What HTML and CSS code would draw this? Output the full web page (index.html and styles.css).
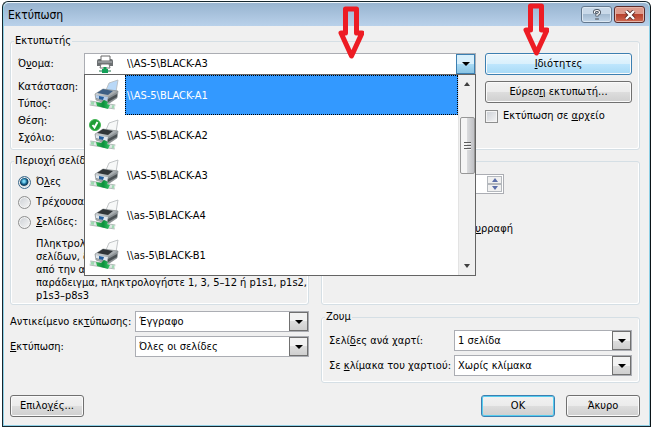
FILE: index.html
```
<!DOCTYPE html>
<html lang="el">
<head>
    <meta charset="utf-8">
    <title>Εκτύπωση</title>
    <link rel="stylesheet" href="styles.css">
</head>
<body>
    <!-- Shared icons -->
    <svg class="sprite" aria-hidden="true">
        <defs>
            <linearGradient id="metal" x1="0" y1="0" x2="1" y2="1">
                <stop offset="0" stop-color="#e4e8ea"/>
                <stop offset="1" stop-color="#6f7578"/>
            </linearGradient>
            <linearGradient id="cable" x1="0" y1="0" x2="1" y2="0">
                <stop offset="0" stop-color="#35b558"/>
                <stop offset="0.5" stop-color="#0b8f3c"/>
                <stop offset="1" stop-color="#35c566"/>
            </linearGradient>
        </defs>
        <symbol id="printer" viewBox="0 0 32 32">
            <path class="paper" d="M17 11 20 4 29 1 27 13 22 16Z" stroke="#b4b8ba" stroke-width="0.8"/>
            <path d="M6 15 14 10 29 12 28 19 19 25 7 21Z" fill="url(#metal)" stroke="#777d80" stroke-width="0.6"/>
            <path class="lid" d="M8 14 14 10 24 12 19 16Z"/>
            <path d="M7 16 19 18 28 13 28 18 19 23 7 20Z" fill="#8b9194"/>
            <path class="panel" d="M7 16 19 18 18 22 7 19Z"/>
            <path d="M10 17 15 18 14 21 10 20Z" fill="#245e9e"/>
            <path d="M19 20 28 15 28 18 19 23Z" fill="#4c5255"/>
            <path d="M1 24 26 28" stroke="#b4bbb9" stroke-width="5"/>
            <path d="M1 24 26 28" stroke="#dfe7e4" stroke-width="3"/>
            <path d="M2 24 5 24.500M23 27.500 25 28" stroke="#9fd9b2" stroke-width="3"/>
            <path d="M7 23 12 24 15 21 19 23 18 25 21 26 19 30 8 27Z" fill="url(#cable)"/>
        </symbol>
        <symbol id="printer-small" viewBox="0 0 18 18">
            <path d="M5 1H14V6H5Z" fill="#fff" stroke="#666"/>
            <path d="M1 6Q1 4 3 4H5V6H14V4H15Q17 4 17 6V11H1Z" fill="#6c7072"/>
            <path d="M2 7H16" stroke="#b8bcbe"/>
            <path d="M5 9H13L14 13H4Z" fill="#fff" stroke="#777"/>
            <path d="M9 12V15" stroke="#129a50" stroke-width="3"/>
            <path d="M3 16H15" stroke="#8fb8a5" stroke-width="2"/>
            <path d="M6 14H12V18H6Z" fill="#12a058"/>
        </symbol>
        <symbol id="arrow" viewBox="0 0 26 54">
            <path d="M7.500 3H18.500V27H24L13.500 50 3 27H7.500Z" fill="none" stroke="#ed1c24" stroke-width="5" stroke-linejoin="round"/>
        </symbol>
    </svg>

    <div class="dialog" role="dialog" aria-labelledby="dialog-title">
        <header class="titlebar">
            <h1 class="title" id="dialog-title">Εκτύπωση</h1>
            <button type="button" class="caption-btn" aria-label="Βοήθεια">
                <svg viewBox="0 0 12 12" width="12" height="12">
                    <path d="M3.500 4.500V3Q3.500 1.500 6 1.500T8.500 3.500Q8.500 5 6 5.500V7.500M6 9V11" fill="none" stroke="#4b5562" stroke-width="3"/>
                    <path d="M3.500 4V3Q3.500 1.500 6 1.500T8.500 3.500Q8.500 5 6 5.500V7M6 9.500V10.500" fill="none" stroke="#fff" stroke-width="1.200"/>
                </svg>
            </button>
            <button type="button" class="caption-btn caption-close" aria-label="Κλείσιμο">
                <svg viewBox="0 0 12 10" width="12" height="10">
                    <path d="M2 1 10 9M10 1 2 9" stroke="#5b2b28" stroke-width="4"/>
                    <path d="M2 1 10 9M10 1 2 9" stroke="#fff" stroke-width="2.400"/>
                </svg>
            </button>
        </header>

        <form class="content">
            <fieldset class="group printer-group">
                <legend>Εκτυπωτής</legend>
                <div class="printer-info">
                    <label for="printer-name" class="name-label">Ό<u>ν</u>ομα:</label>
                    <span>Κατάσταση:</span>
                    <span>Τύπος:</span>
                    <span>Θέση:</span>
                    <span>Σχόλιο:</span>
                </div>
                <div class="printer-pick">
                    <div class="combo combo-open">
                        <select id="printer-name">
                            <option>\\AS-5\BLACK-A3</option>
                        </select>
                        <svg class="combo-icon" width="18" height="18"><use href="#printer-small"/></svg>
                    </div>
                    <div class="printer-list">
                        <ul class="printers" role="listbox" aria-label="Εκτυπωτές">
                            <li class="selected" role="option" aria-selected="true">
                                <svg width="32" height="32"><use href="#printer"/></svg>
                                <span>\\AS-5\BLACK-A1</span>
                            </li>
                            <li role="option">
                                <svg width="32" height="32"><use href="#printer"/></svg>
                                <svg class="default-mark" viewBox="0 0 12 12" width="12" height="12">
                                    <circle cx="6" cy="6" r="5.500" fill="#1f9e35" stroke="#45b556"/>
                                    <path d="M3.500 6 5.500 8.500 8.500 3" fill="none" stroke="#fff" stroke-width="2"/>
                                </svg>
                                <span>\\AS-5\BLACK-A2</span>
                            </li>
                            <li role="option">
                                <svg width="32" height="32"><use href="#printer"/></svg>
                                <span>\\AS-5\BLACK-A3</span>
                            </li>
                            <li role="option">
                                <svg width="32" height="32"><use href="#printer"/></svg>
                                <span>\\as-5\BLACK-A4</span>
                            </li>
                            <li role="option">
                                <svg width="32" height="32"><use href="#printer"/></svg>
                                <span>\\as-5\BLACK-B1</span>
                            </li>
                        </ul>
                        <div class="scrollbar">
                            <i class="tri tri-up"></i>
                            <div class="thumb"><i class="grip"></i></div>
                            <i class="tri tri-down"></i>
                        </div>
                    </div>
                </div>
                <div class="printer-actions">
                    <button type="button" class="btn btn-hot"><u>Ι</u>διότητες</button>
                    <button type="button" class="btn">Εύρεσ<u>η</u> εκτυπωτή...</button>
                    <label class="check"><input type="checkbox"> <span>Εκτύπωση σε <u>α</u>ρχείο</span></label>
                </div>
            </fieldset>

            <div class="columns">
                <fieldset class="group range-group">
                    <legend>Περιοχή σελίδας</legend>
                    <label class="radio"><input type="radio" name="range" checked> <span>Ό<u>λ</u>ες</span></label>
                    <label class="radio"><input type="radio" name="range"> <span>Τρέ<u>χ</u>ουσα σελίδα</span></label>
                    <label class="radio"><input type="radio" name="range"> <span><u>Σ</u>ελίδες:</span></label>
                    <p class="hint">Πληκτρολογήστε αριθμούς ή περιοχές<br>
                        σελίδων, διαχωρισμένα με κόμμα<br>
                        από την αρχή του εγγράφου. Για<br>
                        παράδειγμα, πληκτρολογήστε 1, 3, 5–12 ή p1s1, p1s2,<br>
                        p1s3–p8s3</p>
                </fieldset>

                <fieldset class="group copies-group">
                    <legend>Αντίτυπα</legend>
                    <div class="copies">
                        <label for="copies">Αριθμός αντιτύπων:</label>
                        <div class="spinner">
                            <input type="text" id="copies" value="1">
                            <button type="button" class="spin" aria-label="Αύξηση"><i class="tri tri-up"></i></button>
                            <button type="button" class="spin" aria-label="Μείωση"><i class="tri tri-down"></i></button>
                        </div>
                    </div>
                    <label class="check collate"><input type="checkbox"> <span>Σ<u>υ</u>ρραφή</span></label>
                </fieldset>

                <div class="what">
                    <label for="what">Αντικείμενο εκ<u>τ</u>ύπωσης:</label>
                    <div class="combo">
                        <select id="what"><option>Έγγραφο</option></select>
                    </div>
                    <label for="pages"><u>Ε</u>κτύπωση:</label>
                    <div class="combo">
                        <select id="pages"><option>Όλες οι σελίδες</option></select>
                    </div>
                </div>

                <fieldset class="group zoom-group">
                    <legend>Ζουμ</legend>
                    <label for="per-sheet">Σελί<u>δ</u>ες ανά χαρτί:</label>
                    <div class="combo">
                        <select id="per-sheet"><option>1 σελίδα</option></select>
                    </div>
                    <label for="scale">Σε <u>κ</u>λίμακα του χαρτιού:</label>
                    <div class="combo">
                        <select id="scale"><option>Χωρίς κλίμακα</option></select>
                    </div>
                </fieldset>
            </div>

            <footer class="footer">
                <button type="button" class="btn options">Επιλο<u>γ</u>ές...</button>
                <button type="submit" class="btn btn-default">OK</button>
                <button type="button" class="btn">Άκυρο</button>
            </footer>
        </form>

        <svg class="pointer pointer-list" width="26" height="54"><use href="#arrow"/></svg>
        <svg class="pointer pointer-props" width="26" height="54"><use href="#arrow"/></svg>
    </div>
</body>
</html>
```
FILE: styles.css
```
* {
    box-sizing: border-box;
}
body {
    margin: 0;
    padding: 1px 1px 0 2px;
    background: #fff;
    font-family: "DejaVu Sans Condensed", Tahoma, sans-serif;
    font-size: 11px;
    line-height: 14px;
    color: #000;
}
button, input, select {
    font: inherit;
    color: inherit;
    margin: 0;
}
u {
    text-underline-offset: 1px;
}
.sprite {
    position: absolute;
    width: 0;
    height: 0;
}
.dialog {
    position: relative;
    background: #f0f0f0;
    border: 1px solid #16262e;
    border-right-color: #0b1418;
    border-radius: 6px 6px 0 0;
    box-shadow: inset 0 0 0 1px #8fd0e6;
}

/* Title bar */
.titlebar {
    display: flex;
    align-items: flex-start;
    gap: 2px;
    height: 24px;
    margin: 0 1px;
    padding: 3px 4px 0 4px;
    border-top: 1px solid #eef5fb;
    border-radius: 5px 5px 0 0;
    background: linear-gradient(#98b4d0, #b9d1ea);
}
.title {
    flex: 1;
    margin: 0;
    font-size: 12px;
    font-weight: normal;
    line-height: 18px;
}
.caption-btn {
    display: flex;
    align-items: center;
    justify-content: center;
    width: 31px;
    height: 17px;
    padding: 0;
    border: 1px solid #64798f;
    border-radius: 3px;
    background: linear-gradient(#c9d9e9 50%, #a4bbd1 50%, #c1d5e8);
    box-shadow: inset 0 0 0 1px #dde8f2;
}
.caption-close {
    border-color: #5b2b2b;
    background: linear-gradient(#dd9a8c 50%, #b8412d 50%, #cf6a52);
    box-shadow: inset 0 0 0 1px #e5b5a9;
}

.content {
    padding: 8px 10px 9px 7px;
}
.group {
    min-width: 0;
    margin: 0;
    padding: 0 7px;
    border: 1px solid #d5dfe5;
    border-radius: 3px;
    box-shadow: inset 1px 0 #fff, inset -1px -1px #fff;
}
.group legend {
    margin-left: -4px;
    padding: 0 1px;
}

/* Printer */
.printer-group {
    display: grid;
    grid-template-columns: 66px 1fr 147px;
    padding-top: 5px;
    padding-bottom: 3px;
}
.printer-info {
    display: flex;
    flex-direction: column;
    line-height: 17px;
}
.name-label {
    margin-bottom: 3px;
    line-height: 22px;
}
.printer-pick {
    position: relative;
    margin-right: 9px;
}
.printer-actions {
    display: flex;
    flex-direction: column;
    gap: 6px;
}
.printer-list {
    position: absolute;
    z-index: 2;
    top: 21px;
    left: 0;
    right: 0;
    display: flex;
    border: 1px solid #646464;
    background: #fff;
}
.printers {
    flex: 1;
    margin: 0;
    padding: 0;
    list-style: none;
}
.printers li {
    position: relative;
    display: flex;
    align-items: center;
    height: 40px;
    padding-left: 4px;
    gap: 4px;
}
.printers span {
    flex: 1;
    height: 40px;
    padding-left: 1px;
    border: 1px solid transparent;
    line-height: 40px;
}
.printers .selected span {
    background: #3399ff;
    border: 1px dotted #000;
    color: #fff;
}
.paper {
    fill: var(--paper, #f7f8f8);
}
.lid {
    fill: var(--lid, #303538);
}
.panel {
    fill: var(--panel, #dfe6ec);
}
.selected {
    --paper: #b9d8f7;
    --lid: #3d5f84;
    --panel: #b4cdea;
}
.default-mark {
    position: absolute;
    top: 4px;
    left: 4px;
}
.scrollbar {
    display: flex;
    flex-direction: column;
    align-items: center;
    width: 17px;
    padding: 7px 0;
    background: #f0f0f0;
    border-left: 1px solid #e3e3e3;
}
.thumb {
    display: flex;
    align-items: center;
    justify-content: center;
    width: 15px;
    height: 57px;
    margin-top: 31px;
    margin-bottom: auto;
    border: 1px solid #979797;
    border-radius: 2px;
    background: linear-gradient(to right, #f5f5f5 45%, #d9dadc 50%, #c0c1c5);
}
.grip {
    width: 7px;
    height: 8px;
    background: repeating-linear-gradient(#5c5c5c 0 1px, #f4f4f4 1px 2px, transparent 2px 3px);
}
.tri {
    width: 0;
    height: 0;
    border: 3px solid transparent;
}
.tri-up {
    border-top: 0;
    border-bottom: 4px solid #404040;
}
.tri-down {
    border-bottom: 0;
    border-top: 4px solid #404040;
}

/* Drop-downs */
.combo {
    position: relative;
    height: 21px;
}
.combo select {
    display: block;
    width: 100%;
    height: 100%;
    padding: 0 20px 0 3px;
    border: 1px solid #abadb3;
    border-radius: 0;
    background: #fff;
    appearance: none;
}
.combo::before {
    content: "";
    position: absolute;
    top: 1px;
    right: 1px;
    bottom: 1px;
    width: 17px;
    border: 1px solid #707070;
    background: linear-gradient(#f2f2f2 50%, #dddddd 50%, #cfcfcf);
    pointer-events: none;
}
.combo::after {
    content: "";
    position: absolute;
    top: 9px;
    right: 6px;
    border: 4px solid transparent;
    border-top-color: #000;
    border-bottom: 0;
    pointer-events: none;
}
.combo-open {
    height: 22px;
}
.combo-open select {
    padding-left: 42px;
}
.combo-open::before {
    border-color: #3c7fb1;
    background: linear-gradient(#d9f0fc 50%, #a9dbf5 50%, #8ac4e4);
}
.combo-icon {
    position: absolute;
    top: 2px;
    left: 12px;
}

/* Buttons and boxes */
.btn {
    height: 22px;
    padding: 0 6px;
    border: 1px solid #707070;
    border-radius: 3px;
    background: linear-gradient(#f2f2f2, #ebebeb 50%, #dddddd 50%, #cfcfcf);
    box-shadow: inset 0 0 0 1px #fafafa;
}
.btn-hot {
    border-color: #3c7fb1;
    background: linear-gradient(#eaf6fd, #d9f0fc 50%, #bee6fd 50%, #a7d9f5);
}
.btn-default {
    border-color: #3c7fb1;
    box-shadow: inset 0 0 0 1px #56cdf0;
}
.check, .radio {
    display: flex;
    align-items: center;
    gap: 5px;
}
.check input, .radio input {
    flex: none;
    width: 13px;
    height: 13px;
    border: 1px solid #8e8f8f;
    background: linear-gradient(135deg, #cbcfd5, #f6f6f6);
    box-shadow: inset 0 0 0 1px #f4f4f4;
    appearance: none;
}
.printer-actions .check {
    height: 14px;
}
.radio {
    height: 20px;
}
.radio input {
    border-radius: 50%;
}
.radio input:checked {
    border-color: #3c6a8c;
    background: radial-gradient(circle at 45% 40%, #7fd8f5 0 1px, #0f5f8c 3px, #123c58 4px, #d5dde3 5px);
}

/* Lower part */
.columns {
    display: grid;
    grid-template-columns: 15fr 16fr;
    gap: 5px 12px;
    margin-top: 4px;
}
.range-group {
    padding-top: 4px;
    padding-bottom: 2px;
}
.hint {
    margin: 5px 0 0 18px;
    line-height: 13px;
    white-space: nowrap;
}
.copies-group {
    padding-top: 6px;
}
.copies {
    display: flex;
    align-items: center;
}
.copies label {
    width: 125px;
}
.spinner {
    display: grid;
    grid-template-columns: 1fr 15px;
    grid-template-rows: 8px 8px;
    width: 50px;
    padding: 1px;
    border: 1px solid #abadb3;
    background: #fff;
}
.spinner input {
    grid-row: 1 / 3;
    min-width: 0;
    height: 16px;
    padding: 0 2px;
    border: 0;
}
.spin {
    display: flex;
    align-items: center;
    justify-content: center;
    padding: 0;
    border: 1px solid #b4b8bd;
    background: #f0f0f0;
}
.spin .tri-up {
    border-bottom-color: #5b6ea8;
}
.spin .tri-down {
    border-top-color: #5b6ea8;
}
.collate {
    margin: 28px 0 0 122px;
}
.what, .zoom-group {
    display: grid;
    grid-template-columns: 125px 1fr;
    align-content: start;
    align-items: center;
    row-gap: 4px;
}
.what {
    padding-top: 1px;
}
.zoom-group {
    padding-top: 6px;
    padding-bottom: 6px;
}
.footer {
    display: flex;
    gap: 11px;
    margin-top: 12px;
}
.footer .btn {
    width: 74px;
}
.footer .options {
    margin-right: auto;
}

/* Red call-out arrows */
.pointer {
    position: absolute;
    z-index: 3;
}
.pointer-list {
    top: 4px;
    left: 335px;
}
.pointer-props {
    top: 1px;
    left: 520px;
}
```
